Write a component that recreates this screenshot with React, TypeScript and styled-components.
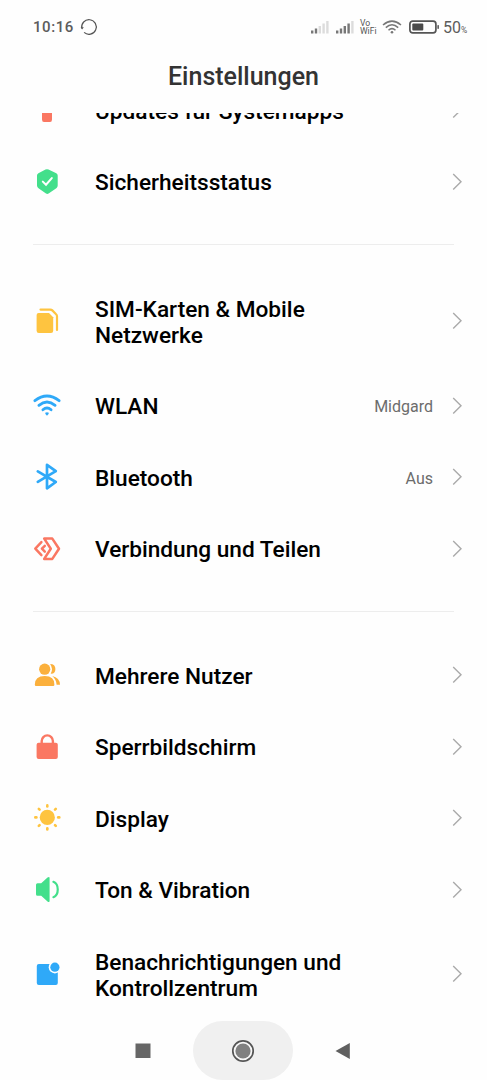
import React from "react";
import styled, { createGlobalStyle } from "styled-components";

const GlobalStyle = createGlobalStyle`
  * { box-sizing: border-box; }
  body { margin: 0; background: #fefefe; font-family: Roboto, "Liberation Sans", sans-serif; }
  svg { display: block; flex: none; }
`;

const Screen = styled.main`
  display: flex;
  flex-direction: column;
  width: 100%;
  height: 1080px;
  overflow: hidden;
  background: #fefefe;
`;

const StatusBar = styled.div`
  display: flex;
  align-items: center;
  height: 54px;
  padding: 0 20px 0 33px;
  color: #5c5c5c;
`;

const Clock = styled.span`
  width: 47px;
  font-size: 15px;
  font-weight: 500;
  letter-spacing: 0.55px;
`;

const StatusIcons = styled.div`
  display: flex;
  align-items: center;
  margin-left: auto;
`;

const Slot = styled.div<{ $gap: number }>`
  margin-right: ${(p) => p.$gap}px;
`;

const VoWifi = styled.div`
  width: 18px;
  font-size: 8.6px;
  line-height: 8px;
  font-weight: 400;
  color: #555;
  white-space: nowrap;
`;

const BatteryText = styled.div`
  width: 24px;
  font-size: 16px;
  white-space: nowrap;
  small { font-size: 8.5px; }
`;

const Title = styled.h1`
  display: flex;
  align-items: center;
  justify-content: center;
  height: 59px;
  margin: 0;
  padding-bottom: 14px;
  font-size: 25px;
  font-weight: 500;
  color: #333;
`;

const Viewport = styled.div`
  flex: 1;
  min-height: 0;
  overflow: hidden;
`;

const List = styled.div`
  margin-top: -38.4px;
`;

const Row = styled.div`
  display: flex;
  align-items: center;
  padding: 22.75px 25px 22.75px 32px;
  > svg { margin-top: -2px; margin-bottom: -2px; }
`;

const Label = styled.span`
  flex: 1;
  margin-left: 33px;
  padding-top: 1.6px;
  margin-bottom: -1.6px;
  font-size: 22.65px;
  line-height: 26px;
  font-weight: 500;
  color: #000;
  white-space: pre-line;
`;

const Value = styled.span`
  margin-right: 19px;
  padding-top: 2.5px;
  font-size: 16px;
  line-height: 20px;
  color: #6c6c6c;
`;

const Divider = styled.hr`
  height: 1px;
  margin: 26.5px 33px 27.5px;
  border: 0;
  background: #ededed;
`;

const NavBar = styled.nav`
  display: flex;
  align-items: center;
  justify-content: center;
  height: 59px;
  padding-right: 2px;
  gap: 42px;
`;

const HomePill = styled.div`
  display: flex;
  align-items: center;
  justify-content: center;
  width: 100px;
  height: 59px;
  border-radius: 30px;
  background: #f0f0f0;
`;

const RED = "#fa7762";
const GREEN = "#43df8b";
const YELLOW = "#fec440";
const BLUE = "#2fa9f8";

const Icon = ({ children }: { children: React.ReactNode }) => (
  <svg width="30" height="30" viewBox="0 0 30 30" fill="none">{children}</svg>
);

const icons = {
  update: <Icon><path d="M15 2L26 14H20V24.5Q20 27 18 27H12Q10 27 10 24.5V14H4Z" fill={RED} /></Icon>,
  shield: (
    <Icon>
      <path d="M13.5 2.6Q15 1.7 16.5 2.6L24.3 6.2Q25.7 6.9 25.7 8.4V18.5Q25.7 20.2 24.3 21.2L16.6 26.6Q15.3 27.5 14 26.6L6.5 21.2Q5 20.2 5 18.5V8.4Q5 6.9 6.4 6.2Z" fill={GREEN} />
      <path d="M10.8 14.6L14 17.7L19.8 11.1" stroke="#fff" strokeWidth="2" strokeLinecap="round" />
    </Icon>
  ),
  sim: (
    <Icon>
      <path d="M6.6 7H17L21.2 11.2V24.8Q21.2 27 19 27H6.8Q4.6 27 4.6 24.8V9Q4.6 7 6.6 7Z" fill={YELLOW} />
      <path d="M8.5 3.6H18.2Q19.5 3.6 20.3 4.4L24.1 8.2Q25 9 25 10.3V24" stroke={YELLOW} strokeWidth="2.2" strokeLinecap="round" />
    </Icon>
  ),
  wifi: (
    <Icon>
      <g stroke={BLUE} strokeWidth="2.8" strokeLinecap="round">
        <path d="M2.9 9.7Q15 .4 27.1 9.7" />
        <path d="M6.9 14.3Q15 7.6 23.1 14.3" />
        <path d="M10.9 18.8Q15 15.2 19.1 18.8" />
      </g>
      <path d="M13.2 21.8Q15 20.8 16.8 21.8Q17.2 23 15 24.8Q12.8 23 13.2 21.8Z" fill={BLUE} />
    </Icon>
  ),
  bluetooth: (
    <Icon>
      <path d="M5.8 9.4L23.8 20L15 26.3V2.8L23.8 9.2L5.8 19.8" stroke={BLUE} strokeWidth="2.7" strokeLinecap="round" strokeLinejoin="round" />
    </Icon>
  ),
  share: (
    <Icon>
      <g stroke={RED} strokeWidth="2.5" strokeLinejoin="round" strokeLinecap="round">
        <path d="M12.2 4.6H20.3L27 14.7L20.3 24.9H12.2L18.8 14.7Z" />
        <path d="M9.4 8.2L3.3 14.7L9.4 21.2" />
        <path d="M12.8 11.8L9.9 14.7L12.8 17.6" />
      </g>
    </Icon>
  ),
  users: (
    <Icon>
      <g fill="#fbb03c">
        <circle cx="12.7" cy="9.2" r="5.6" />
        <path d="M2.8 24.7Q2.8 16 12.7 16T22.4 24.7Q22.4 26 21.2 26H4Q2.8 26 2.8 24.7Z" />
        <path d="M18.1 4Q23.4 4.1 23.4 9.1T18.7 13.8Q21.6 9 18.1 4Z" />
        <path d="M20.2 16Q27.8 17.8 28 24.7H24.6Q24.3 19.5 20.2 16Z" />
      </g>
    </Icon>
  ),
  lock: (
    <Icon>
      <rect x="4.6" y="10.7" width="21.2" height="16.3" rx="2" fill={RED} />
      <path d="M9.7 12V9A5.6 5.6 0 0 1 20.9 9V12" stroke={RED} strokeWidth="2.4" />
    </Icon>
  ),
  sun: (
    <Icon>
      <circle cx="15.3" cy="14.4" r="7.6" fill={YELLOW} />
      {[0, 45, 90, 135, 180, 225, 270, 315].map((a) => (
        <path key={a} d="M15.3 2.4V3.5" stroke={YELLOW} strokeWidth="2.6" strokeLinecap="round" transform={`rotate(${a} 15.3 14.4)`} />
      ))}
    </Icon>
  ),
  sound: (
    <Icon>
      <path d="M5.5 8.2H9.2L15.5 2.6Q17.6 1.1 17.6 3.2V25.8Q17.6 27.9 15.5 26.4L9.2 20.8H5.5Q4 20.8 4 19.3V9.7Q4 8.2 5.5 8.2Z" fill={GREEN} />
      <path d="M21.4 6.8C27.2 9 27.2 20 21.4 22.2" stroke={GREEN} strokeWidth="2.2" strokeLinecap="round" />
    </Icon>
  ),
  notice: (
    <Icon>
      <rect x="4.8" y="4.9" width="21" height="21" rx="2" fill={BLUE} />
      <circle cx="22.9" cy="8.2" r="6.2" fill="#fefefe" />
      <circle cx="22.9" cy="8.2" r="4.6" fill={BLUE} />
    </Icon>
  ),
};

const Chevron = () => (
  <svg width="10" height="18" viewBox="0 0 10 18" fill="none">
    <path d="M1.2 1L9 8.8L1.2 16.6" stroke="#aaa" strokeWidth="1.4" />
  </svg>
);

type Item = { icon: keyof typeof icons; label: string; value?: string };

const sections: Item[][] = [
  [
    { icon: "update", label: "Updates für Systemapps" },
    { icon: "shield", label: "Sicherheitsstatus" },
  ],
  [
    { icon: "sim", label: "SIM-Karten & Mobile\nNetzwerke" },
    { icon: "wifi", label: "WLAN", value: "Midgard" },
    { icon: "bluetooth", label: "Bluetooth", value: "Aus" },
    { icon: "share", label: "Verbindung und Teilen" },
  ],
  [
    { icon: "users", label: "Mehrere Nutzer" },
    { icon: "lock", label: "Sperrbildschirm" },
    { icon: "sun", label: "Display" },
    { icon: "sound", label: "Ton & Vibration" },
    { icon: "notice", label: "Benachrichtigungen und\nKontrollzentrum" },
  ],
];

const Signal = ({ active }: { active: number }) => (
  <svg width="18" height="13" viewBox="0 0 18 13">
    {[3, 5, 7.5, 10, 12.5].map((h, i) => (
      <rect key={h} x={i * 3.8} y={12.5 - h} width="2.4" height={h} fill={i < active ? "#777" : "#dcdcdc"} />
    ))}
  </svg>
);

export default function App() {
  return (
    <Screen>
      <GlobalStyle />
      <StatusBar>
        <Clock>10:16</Clock>
        <svg width="18" height="18" viewBox="0 0 18 18" fill="none">
          <path d="M1.8 10.3A7.3 7.3 0 1 1 4.1 14.4" stroke="#555" strokeWidth="1.2" />
          <path d="M.6 9.2H3.8L2.1 11.6Z" fill="#555" />
        </svg>
        <StatusIcons>
          <Slot $gap={6.5}><Signal active={2} /></Slot>
          <Slot $gap={6.5}><Signal active={4} /></Slot>
          <Slot $gap={4}><VoWifi>Vo<br />WiFi</VoWifi></Slot>
          <Slot $gap={7}>
            <svg width="20" height="14" viewBox="0 0 20 14" fill="none" stroke="#777" strokeWidth="1.5">
              <path d="M1 5Q10-2.8 19 5M3.8 7.6Q10 2 16.2 7.6M6.5 10.2Q10 7 13.5 10.2" />
              <circle cx="10" cy="12.3" r="1.3" fill="#777" stroke="none" />
            </svg>
          </Slot>
          <Slot $gap={4}>
            <svg width="30" height="14" viewBox="0 0 30 14" fill="none">
              <rect x=".9" y="1.1" width="26" height="11.8" rx="2.8" stroke="#555" strokeWidth="1.7" />
              <rect x="3.3" y="3.6" width="11" height="6.8" rx="1" fill="#4a4a4a" />
              <rect x="28.4" y="5" width="1.5" height="4" rx=".7" fill="#555" />
            </svg>
          </Slot>
          <BatteryText>50<small>%</small></BatteryText>
        </StatusIcons>
      </StatusBar>
      <Title>Einstellungen</Title>
      <Viewport>
        <List>
          {sections.map((items, i) => (
            <React.Fragment key={i}>
              {i > 0 && <Divider />}
              {items.map((item) => (
                <Row key={item.label}>
                  {icons[item.icon]}
                  <Label>{item.label}</Label>
                  {item.value && <Value>{item.value}</Value>}
                  <Chevron />
                </Row>
              ))}
            </React.Fragment>
          ))}
        </List>
      </Viewport>
      <NavBar>
        <svg width="16" height="16" viewBox="0 0 16 16"><rect x=".5" y=".5" width="15" height="14.5" fill="#666" /></svg>
        <HomePill>
          <svg width="24" height="24" viewBox="0 0 24 24">
            <circle cx="12" cy="12" r="10.2" fill="#f8f8f8" stroke="#555" strokeWidth="1.7" />
            <circle cx="12" cy="12" r="7.6" fill="#808080" />
          </svg>
        </HomePill>
        <svg width="16" height="18" viewBox="0 0 16 18"><path d="M.5 9L14.8 1V17Z" fill="#606060" /></svg>
      </NavBar>
    </Screen>
  );
}
